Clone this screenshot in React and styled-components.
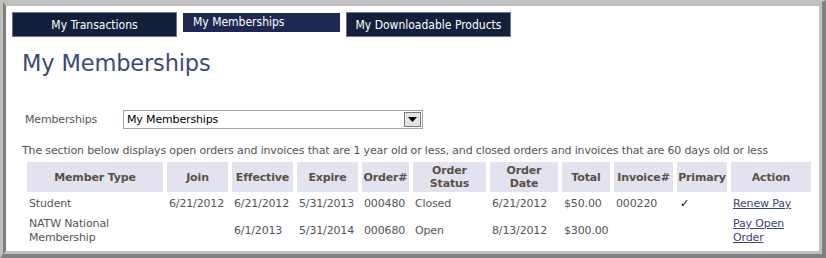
import React from "react";
import styled, { createGlobalStyle } from "styled-components";

const GlobalStyle = createGlobalStyle`
  body {
    margin: 0;
    background: #fff;
    font-family: Tahoma, "DejaVu Sans", sans-serif;
    font-size: 11px;
    letter-spacing: -0.15px;
    color: #555;
  }
`;

const tabs = [
  { label: "My Transactions", width: 165 },
  { label: "My Memberships", width: 157, active: true },
  { label: "My Downloadable Products", width: 165 },
];

const columns = [
  { title: "Member Type", width: 136 },
  { title: "Join", width: 61 },
  { title: "Effective", width: 61 },
  { title: "Expire", width: 61 },
  { title: "Order#", width: 47 },
  { title: ["Order", "Status"], width: 73 },
  { title: ["Order", "Date"], width: 68 },
  { title: "Total", width: 48 },
  { title: "Invoice#", width: 59 },
  { title: "Primary", width: 50 },
  { title: "Action", width: 80 },
];

const rows = [
  {
    type: ["Student"],
    join: "6/21/2012",
    effective: "6/21/2012",
    expire: "5/31/2013",
    order: "000480",
    status: "Closed",
    date: "6/21/2012",
    total: "$50.00",
    invoice: "000220",
    primary: true,
    action: ["Renew Pay"],
  },
  {
    type: ["NATW National", "Membership"],
    join: "",
    effective: "6/1/2013",
    expire: "5/31/2014",
    order: "000680",
    status: "Open",
    date: "8/13/2012",
    total: "$300.00",
    invoice: "",
    primary: false,
    action: ["Pay Open", "Order"],
  },
];

const Lines = ({ parts }) =>
  [].concat(parts).map((p, i) => (
    <React.Fragment key={i}>
      {i > 0 && <br />}
      {p}
    </React.Fragment>
  ));

const App = () => {
  return (
    <>
      <GlobalStyle />
      <Frame>
        <Panel>
          <TabBar>
            {tabs.map((t) => (
              <Tab key={t.label} $width={t.width} $active={t.active}>
                {t.label}
              </Tab>
            ))}
          </TabBar>

          <Content>
            <Title>My Memberships</Title>

            <FilterRow>
              <FilterLabel>Memberships</FilterLabel>
              <Select>
                <span>My Memberships</span>
                <SelectArrow>
                  <svg width="9" height="5" viewBox="0 0 9 5">
                    <path d="M0 0h9L4.5 5z" fill="#000" />
                  </svg>
                </SelectArrow>
              </Select>
            </FilterRow>

            <Note>
              The section below displays open orders and invoices that are 1
              year old or less, and closed orders and invoices that are 60 days
              old or less
            </Note>

            <Table>
              <colgroup>
                {columns.map((c, i) => (
                  <Col key={i} $width={c.width} />
                ))}
              </colgroup>
              <thead>
                <tr>
                  {columns.map((c, i) => (
                    <Th key={i}>
                      <Lines parts={c.title} />
                    </Th>
                  ))}
                </tr>
              </thead>
              <tbody>
                {rows.map((r, i) => (
                  <tr key={i}>
                    <Td>
                      <Lines parts={r.type} />
                    </Td>
                    <Td>{r.join}</Td>
                    <Td>{r.effective}</Td>
                    <Td>{r.expire}</Td>
                    <Td>{r.order}</Td>
                    <Td>{r.status}</Td>
                    <Td>{r.date}</Td>
                    <Td>{r.total}</Td>
                    <Td>{r.invoice}</Td>
                    <Td>{r.primary && <Check>✓</Check>}</Td>
                    <Td>
                      <ActionLink href="#">
                        <Lines parts={r.action} />
                      </ActionLink>
                    </Td>
                  </tr>
                ))}
              </tbody>
            </Table>
          </Content>
        </Panel>
      </Frame>
    </>
  );
};

const Frame = styled.div`
  width: 826px;
  height: 258px;
  box-sizing: border-box;
  border-style: solid;
  border-width: 2px 4px 4px 3px;
  border-color: #c0c0c0 #808080 #808080 #c0c0c0;
`;

const Panel = styled.div`
  height: 100%;
  box-sizing: border-box;
  border-style: solid;
  border-width: 4px 3px 3px 3px;
  border-color: #c0c0c0 #c0c0c0 #c0c0c0 #808080;
  padding: 6px 0 0 6px;
`;

const TabBar = styled.div`
  display: flex;
  align-items: flex-start;
  gap: 6px;
`;

const Tab = styled.div`
  width: ${(p) => p.$width}px;
  box-sizing: border-box;
  height: ${(p) => (p.$active ? 19 : 25)}px;
  margin-top: ${(p) => (p.$active ? 1 : 0)}px;
  background: ${(p) => (p.$active ? "#1e2852" : "#14203b")};
  border: ${(p) => (p.$active ? "none" : "1px solid #6d7494")};
  color: #fff;
  font-family: Tahoma, "DejaVu Sans Condensed", sans-serif;
  font-size: 12px;
  letter-spacing: 0;
  display: flex;
  align-items: ${(p) => (p.$active ? "flex-start" : "center")};
  justify-content: ${(p) => (p.$active ? "flex-start" : "center")};
  padding: ${(p) => (p.$active ? "2px 0 0 10px" : "0")};
  white-space: nowrap;
`;

const Content = styled.div`
  padding-left: 10px;
`;

const Title = styled.h1`
  margin: 12px 0 0;
  font-size: 22.5px;
  line-height: 28px;
  font-weight: normal;
  color: #3b4a78;
`;

const FilterRow = styled.div`
  display: flex;
  align-items: center;
  margin-top: 33px;
`;

const FilterLabel = styled.label`
  width: 98px;
  padding-left: 3px;
  color: #555;
`;

const Select = styled.div`
  width: 300px;
  height: 19px;
  box-sizing: border-box;
  border: 1px solid #a5a5a5;
  display: flex;
  align-items: center;
  justify-content: space-between;
  padding: 0 1px 0 3px;
  color: #000;
`;

const SelectArrow = styled.span`
  width: 17px;
  height: 15px;
  box-sizing: border-box;
  border: 1px solid #7a7a7a;
  background: #e4e4e4;
  display: flex;
  align-items: center;
  justify-content: center;
`;

const Note = styled.p`
  margin: 15px 0 0;
  line-height: 14px;
  white-space: nowrap;
  color: #555;
`;

const Table = styled.table`
  table-layout: fixed;
  width: 792px;
  margin-left: 1px;
  border-collapse: separate;
  border-spacing: 4px;
`;

const Col = styled.col`
  width: ${(p) => p.$width}px;
`;

const Th = styled.th`
  background: #e3e3f0;
  color: #5a5048;
  font-weight: bold;
  text-align: center;
  padding: 2px 1px;
  line-height: 13px;
  vertical-align: middle;
`;

const Td = styled.td`
  padding: 1px 2px;
  line-height: 14px;
  vertical-align: middle;
  white-space: nowrap;
  color: #555;
`;

const Check = styled.span`
  color: #000;
  padding-left: 1px;
`;

const ActionLink = styled.a`
  color: #3a4577;
  text-decoration: underline;
`;

export default App;
